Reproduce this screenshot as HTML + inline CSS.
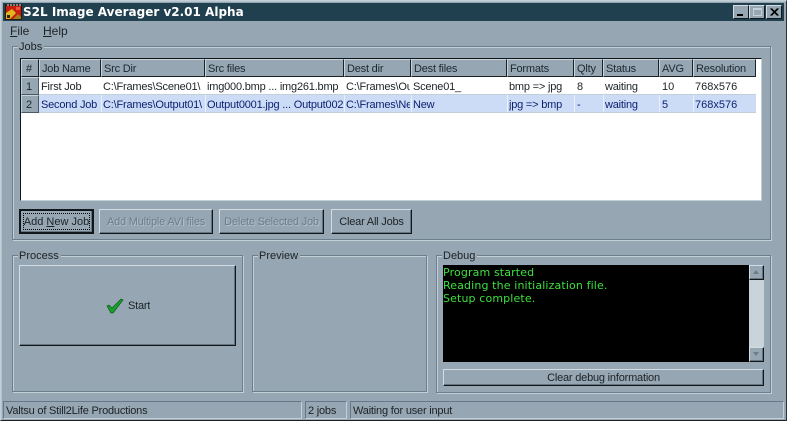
<!DOCTYPE html>
<html><head><meta charset="utf-8"><style>
html,body{margin:0;padding:0}
body{width:787px;height:421px;position:relative;overflow:hidden;background:#96a6b2;font:11px/13px "Liberation Sans",sans-serif;letter-spacing:-.2px;color:#1c2226}
div{position:absolute;box-sizing:border-box}
.t{white-space:nowrap;overflow:hidden}
.n{letter-spacing:0}
.g{border:1px solid #6c7f8c;box-shadow:1px 1px 0 #c3d0d8,inset 1px 1px 0 #c3d0d8}
.l{background:#96a6b2;padding:0 2px 0 1px;height:13px;white-space:nowrap;color:#1c2226;letter-spacing:0}
.h{height:18px;top:59px;background:#96a6b2;border:1px solid;border-color:#c8d4dc #1a2228 #1a2228 #c8d4dc;padding:3px 0 0 2px;white-space:nowrap;overflow:hidden;color:#1c2830}
.c{height:17px;padding-top:4px;white-space:nowrap;overflow:hidden}
.b{background:#96a6b2;border:1px solid;border-color:#d3dde3 #10161a #10161a #d3dde3;box-shadow:inset -1px -1px 0 #64757f;text-align:center;white-space:nowrap}
.d{color:#6c7d89;text-shadow:1px 1px 0 #b4c2cb}
.s{border:1px solid;border-color:#66788a #c3d0d8 #c3d0d8 #66788a;height:18px;top:401px;padding:3px 0 0 2px;white-space:nowrap}
.w{width:16px;height:14px;top:5px;background:#96a6b2;border:1px solid;border-color:#d3dde3 #10161a #10161a #d3dde3}
.r2{color:#0a1f70}
</style></head><body>
<div style="left:0;top:0;width:787px;height:421px;border:1px solid #c3d0d8;border-right-color:#27343c;border-bottom-color:#1a2228;box-shadow:inset 1px 1px 0 #b5c3cc"></div>
<div style="left:3px;top:3px;width:781px;height:18px;background:#21404f"></div>
<svg style="position:absolute;left:5px;top:4px" width="17" height="16" viewBox="0 0 17 16"><rect width="17" height="16" fill="#2a1c10"/><rect x="1" y="2" width="15" height="13" fill="#c81e10"/><path d="M1 15L1 9L7 5L11 9L5 15Z" fill="#e0b820"/><path d="M8 15L13 10L16 13V15Z" fill="#a08020"/><path d="M3 0V2M6 0V2M9 0V2M12 0V2M15 0V2" stroke="#f0f0f0"/><rect x="11" y="3" width="4" height="3" fill="#ee5540"/><rect x="2" y="11" width="3" height="3" fill="#30200c"/></svg>
<div class="t" style="left:23px;top:4px;font:bold 12px/16px 'DejaVu Sans',sans-serif;letter-spacing:0;color:#fff">S2L Image Averager v2.01 Alpha</div>
<div class="w" style="left:733px"><div style="left:3px;bottom:2px;width:6px;height:2px;background:#000"></div></div>
<div class="w" style="left:749px"><div style="left:3px;top:2px;width:9px;height:8px;border:1px solid #c3d0d8;border-top-width:2px"></div></div>
<div class="w" style="left:766px"><svg style="position:absolute;left:3px;top:2px" width="9" height="8"><path d="M0.5 0.5L7.5 7.5M1.5 0.5L8.5 7.5M7.5 0.5L0.5 7.5M8.5 0.5L1.5 7.5" stroke="#000"/></svg></div>
<div class="t n" style="left:10px;top:25px;font-size:12px"><u>F</u>ile</div>
<div class="t n" style="left:43px;top:25px;font-size:12px"><u>H</u>elp</div>

<div class="g" style="left:12px;top:46px;width:759px;height:194px"></div>
<div class="l" style="left:18px;top:41px">Jobs</div>
<div style="left:20px;top:58px;width:742px;height:143px;background:#fff;border:1px solid;border-color:#10161a #c3d0d8 #c3d0d8 #10161a"></div>

<div class="h" style="left:21px;width:18px;padding-left:4px">#</div>
<div class="h" style="left:39px;width:62px">Job Name</div>
<div class="h" style="left:101px;width:104px">Src Dir</div>
<div class="h" style="left:205px;width:139px">Src files</div>
<div class="h" style="left:344px;width:67px">Dest dir</div>
<div class="h" style="left:411px;width:96px">Dest files</div>
<div class="h" style="left:507px;width:67px">Formats</div>
<div class="h" style="left:574px;width:29px">Qlty</div>
<div class="h" style="left:603px;width:56px">Status</div>
<div class="h" style="left:659px;width:34px">AVG</div>
<div class="h" style="left:693px;width:63px">Resolution</div>

<div class="h n" style="left:21px;top:77px;width:18px;padding-left:4px;border-color:#c8d4dc #4a5a66 #4a5a66 #c8d4dc">1</div>
<div class="h n" style="left:21px;top:95px;width:18px;padding-left:4px;border-color:#c8d4dc #4a5a66 #4a5a66 #c8d4dc">2</div>

<div style="left:39px;top:77px;width:717px;height:18px;border-bottom:1px solid #c3cfd8"></div>
<div style="left:39px;top:95px;width:717px;height:18px;background:#ccdcf6;border-bottom:1px solid #c3cfd8"></div>

<div class="c" style="left:41px;top:77px;width:60px">First Job</div>
<div class="c" style="left:103px;top:77px;width:101px">C:\Frames\Scene01\</div>
<div class="c" style="left:207px;top:77px;width:136px">img000.bmp ... img261.bmp</div>
<div class="c" style="left:346px;top:77px;width:64px">C:\Frames\Output\</div>
<div class="c" style="left:413px;top:77px;width:93px">Scene01_</div>
<div class="c" style="left:509px;top:77px;width:64px">bmp =&gt; jpg</div>
<div class="c n" style="left:577px;top:77px;width:25px">8</div>
<div class="c" style="left:605px;top:77px;width:53px">waiting</div>
<div class="c n" style="left:662px;top:77px;width:30px">10</div>
<div class="c n" style="left:695px;top:77px;width:60px">768x576</div>

<div class="c r2" style="left:41px;top:95px;width:58px">Second Job</div>
<div class="c r2" style="left:103px;top:95px;width:101px">C:\Frames\Output01\</div>
<div class="c r2" style="left:207px;top:95px;width:136px">Output0001.jpg ... Output0021.jpg</div>
<div class="c r2" style="left:346px;top:95px;width:64px">C:\Frames\New\</div>
<div class="c r2" style="left:413px;top:95px;width:93px">New</div>
<div class="c r2" style="left:509px;top:95px;width:64px">jpg =&gt; bmp</div>
<div class="c r2" style="left:577px;top:95px;width:25px">-</div>
<div class="c r2" style="left:605px;top:95px;width:53px">waiting</div>
<div class="c r2 n" style="left:662px;top:95px;width:30px">5</div>
<div class="c r2 n" style="left:695px;top:95px;width:60px">768x576</div>
<div style="left:101px;top:95px;width:1px;height:17px;background:#e8f0fb"></div>
<div style="left:205px;top:95px;width:1px;height:17px;background:#e8f0fb"></div>
<div style="left:344px;top:95px;width:1px;height:17px;background:#e8f0fb"></div>
<div style="left:411px;top:95px;width:1px;height:17px;background:#e8f0fb"></div>
<div style="left:507px;top:95px;width:1px;height:17px;background:#e8f0fb"></div>
<div style="left:574px;top:95px;width:1px;height:17px;background:#e8f0fb"></div>
<div style="left:603px;top:95px;width:1px;height:17px;background:#e8f0fb"></div>
<div style="left:659px;top:95px;width:1px;height:17px;background:#e8f0fb"></div>
<div style="left:693px;top:95px;width:1px;height:17px;background:#e8f0fb"></div>

<div class="b n" style="left:19px;top:209px;width:75px;height:25px;border:2px solid #10161a;line-height:23px">Add <u>N</u>ew Job<div style="left:2px;top:2px;right:2px;bottom:2px;border:1px dotted #000"></div></div>
<div class="b d" style="left:99px;top:209px;width:114px;height:25px;line-height:24px">Add Multiple AVI files</div>
<div class="b d" style="left:219px;top:209px;width:105px;height:25px;line-height:24px">Delete Selected Job</div>
<div class="b" style="left:331px;top:209px;width:81px;height:25px;line-height:24px">Clear All Jobs</div>

<div class="g" style="left:12px;top:255px;width:231px;height:137px"></div>
<div class="l" style="left:18px;top:250px">Process</div>
<div class="g" style="left:252px;top:255px;width:175px;height:137px"></div>
<div class="l" style="left:258px;top:250px">Preview</div>
<div class="g" style="left:436px;top:255px;width:335px;height:138px"></div>
<div class="l" style="left:442px;top:250px">Debug</div>

<div class="b" style="left:19px;top:265px;width:217px;height:81px"></div>
<svg style="position:absolute;left:106px;top:298px" width="18" height="16" viewBox="0 0 18 16"><path d="M1 8L3 7L6 10L15 1L17 2L7 15H5Z" fill="#17a02e" stroke="#0c5a1a" stroke-width=".7"/></svg>
<div class="t" style="left:128px;top:300px">Start</div>

<div style="left:443px;top:265px;width:306px;height:97px;background:#000;color:#3ee03e;font:11px/13px 'DejaVu Sans',sans-serif;letter-spacing:.13px;padding:1px 0 0 0;white-space:pre">Program started
Reading the initialization file.
Setup complete.</div>
<div style="left:749px;top:265px;width:15px;height:97px;background:#c8d3da"></div>
<div class="b" style="left:749px;top:265px;width:15px;height:15px"><div style="left:3px;top:4px;width:0;height:0;border:3.5px solid transparent;border-top:0;border-bottom:4px solid #6c7d89"></div></div>
<div class="b" style="left:749px;top:347px;width:15px;height:15px"><div style="left:3px;top:4px;width:0;height:0;border:3.5px solid transparent;border-bottom:0;border-top:4px solid #6c7d89"></div></div>
<div class="b" style="left:443px;top:369px;width:321px;height:17px;line-height:16px">Clear debug information</div>

<div class="s" style="left:3px;width:299px">Valtsu of Still2Life Productions</div>
<div class="s" style="left:305px;width:42px">2 jobs</div>
<div class="s" style="left:350px;width:434px">Waiting for user input</div>
</body></html>
